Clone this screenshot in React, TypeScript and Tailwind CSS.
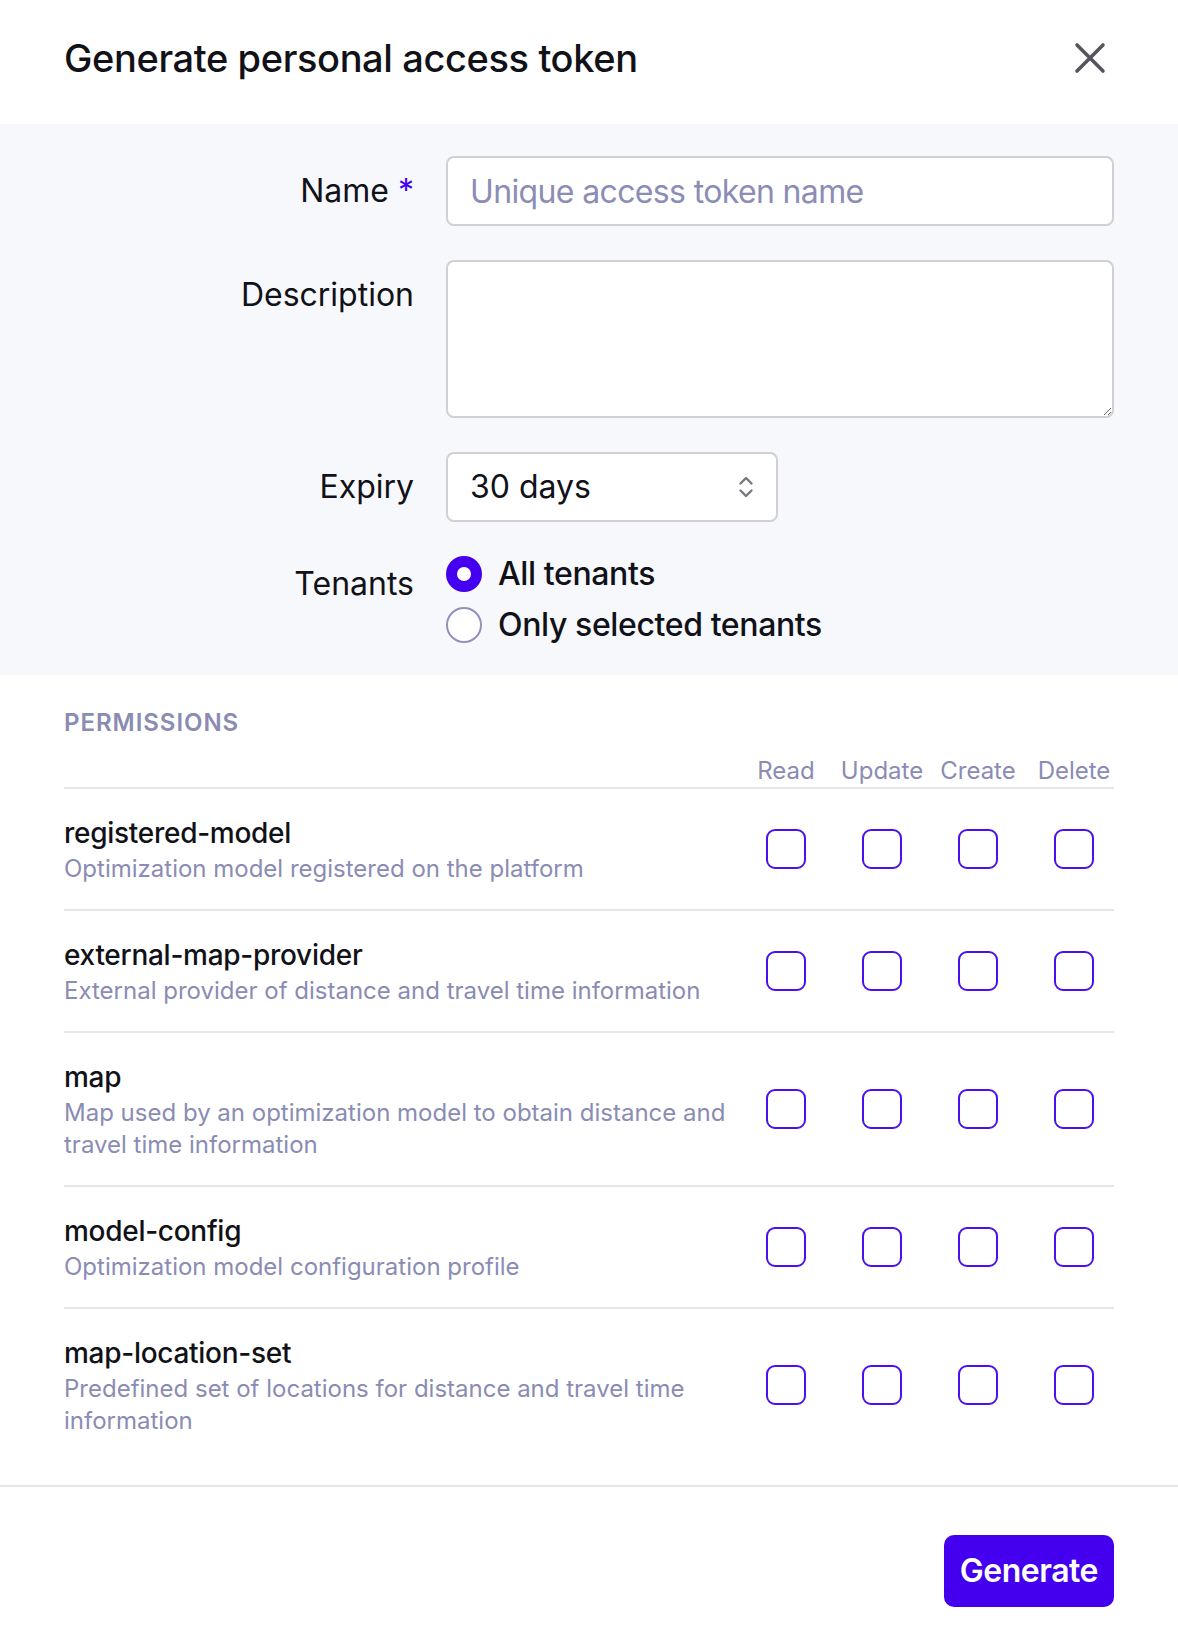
import { useState } from "react";

const PERMISSIONS = [
  { name: "registered-model", description: "Optimization model registered on the platform" },
  { name: "external-map-provider", description: "External provider of distance and travel time information" },
  { name: "map", description: "Map used by an optimization model to obtain distance and travel time information" },
  { name: "model-config", description: "Optimization model configuration profile" },
  { name: "map-location-set", description: "Predefined set of locations for distance and travel time information" },
];

const ACTIONS = ["Read", "Update", "Create", "Delete"];

function CloseIcon() {
  return (
    <svg width="32" height="32" viewBox="0 0 32 32" fill="none">
      <path d="M3 3L29 29M29 3L3 29" stroke="#55555e" strokeWidth="3.6" strokeLinecap="round" />
    </svg>
  );
}

function ChevronUpDown() {
  return (
    <svg width="16" height="24" viewBox="0 0 16 24" fill="none">
      <path d="M2.5 8.5L8 3L13.5 8.5M2.5 15.5L8 21L13.5 15.5" stroke="#77777e" strokeWidth="2.4" strokeLinecap="round" strokeLinejoin="round" />
    </svg>
  );
}

function Radio({ checked, label, onClick }: { checked: boolean; label: string; onClick: () => void }) {
  return (
    <button type="button" onClick={onClick} className="flex h-9 items-center gap-4 text-left">
      {checked ? (
        <span className="flex h-9 w-9 items-center justify-center rounded-full bg-[#4400ee]">
          <span className="h-[14px] w-[14px] rounded-full bg-white" />
        </span>
      ) : (
        <span className="h-9 w-9 rounded-full border-2 border-[#9191bb] bg-white" />
      )}
      <span className="text-[32px] font-medium leading-9 tracking-[-0.012em] text-[#111118]">{label}</span>
    </button>
  );
}

export default function App() {
  const [tenants, setTenants] = useState("all");
  const [checked, setChecked] = useState<Record<string, boolean>>({});

  const toggle = (key: string) => setChecked((prev) => ({ ...prev, [key]: !prev[key] }));

  return (
    <div className="w-[1178px] bg-white font-['Inter','Noto_Sans',sans-serif] text-[#111118]">
      <header className="flex h-[124px] items-center justify-between px-16 pb-2">
        <h1 className="text-[38px] font-medium leading-none tracking-[-0.01em]">Generate personal access token</h1>
        <button type="button" className="flex h-12 w-12 items-center justify-center">
          <CloseIcon />
        </button>
      </header>

      <section className="flex flex-col gap-[34px] bg-[#f7f8fc] px-16 py-8">
        <div className="grid grid-cols-[350px_1fr] gap-x-8">
          <label className="text-right text-[32px] leading-[70px]">
            Name <span className="text-[#4400ee]">*</span>
          </label>
          <input
            placeholder="Unique access token name"
            className="h-[70px] rounded-lg border-2 border-[#d0d0d5] bg-white px-[22px] text-[32px] tracking-[-0.02em] outline-none placeholder:text-[#8b8db5]"
          />
        </div>

        <div className="grid grid-cols-[350px_1fr] gap-x-8">
          <label className="text-right text-[32px] leading-[70px]">Description</label>
          <textarea className="h-[158px] rounded-lg border-2 border-[#d0d0d5] bg-white px-[22px] py-3 text-[32px] outline-none" />
        </div>

        <div className="grid grid-cols-[350px_1fr] gap-x-8">
          <label className="text-right text-[32px] leading-[70px]">Expiry</label>
          <div className="flex h-[70px] w-[332px] items-center justify-between rounded-lg border-2 border-[#d0d0d5] bg-white pl-[22px] pr-[22px]">
            <span className="text-[32px]">30 days</span>
            <ChevronUpDown />
          </div>
        </div>

        <div className="grid grid-cols-[350px_1fr] gap-x-8">
          <label className="pt-[10px] text-right text-[32px] leading-9">Tenants</label>
          <div className="flex flex-col gap-[15px]">
            <Radio checked={tenants === "all"} label="All tenants" onClick={() => setTenants("all")} />
            <Radio checked={tenants === "selected"} label="Only selected tenants" onClick={() => setTenants("selected")} />
          </div>
        </div>
      </section>

      <section className="px-16 pb-6 pt-8">
        <div className="text-[24px] font-semibold leading-8 tracking-[0.04em] text-[#8a8cb3]">PERMISSIONS</div>

        <div className="mt-4 flex justify-end border-b-2 border-[#e6e6ea]">
          <div className="-mr-2 flex">
            {ACTIONS.map((action) => (
              <div key={action} className="w-24 text-center text-[24px] leading-8 text-[#8a8cb3]">
                {action}
              </div>
            ))}
          </div>
        </div>

        {PERMISSIONS.map((perm, i) => (
          <div
            key={perm.name}
            className={`flex items-center py-6 ${i < PERMISSIONS.length - 1 ? "border-b-2 border-[#e6e6ea]" : ""}`}
          >
            <div className="min-w-0 flex-1">
              <div className="text-[28px] font-medium leading-10 tracking-[-0.01em]">{perm.name}</div>
              <div className="text-[24px] leading-8 text-[#8a8cb3]">{perm.description}</div>
            </div>
            <div className="-mr-2 flex">
              {ACTIONS.map((action) => {
                const key = `${perm.name}-${action}`;
                return (
                  <div key={action} className="flex w-24 justify-center">
                    <button
                      type="button"
                      onClick={() => toggle(key)}
                      className={`h-10 w-10 rounded-[9px] border-[2.5px] border-[#4a10f0] ${checked[key] ? "bg-[#4400ee]" : "bg-white"}`}
                    />
                  </div>
                );
              })}
            </div>
          </div>
        ))}
      </section>

      <footer className="flex justify-end border-t-2 border-[#e6e6ea] px-16 pb-[42px] pt-12">
        <button type="button" className="h-[72px] rounded-[10px] bg-[#4400ee] px-4 text-[32px] font-semibold tracking-[-0.015em] text-white">
          Generate
        </button>
      </footer>
    </div>
  );
}
